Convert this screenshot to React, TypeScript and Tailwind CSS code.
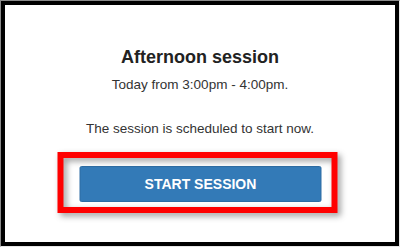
export default function App() {
  return (
    <div className="w-[400px] h-[247px] bg-white border border-t-[#8a8a8a] border-l-[#8a8a8a] border-r-[#e6e6e6] border-b-[#e6e6e6] box-border" style={{ fontFamily: '"Liberation Sans", Arial, sans-serif' }}>
      <div className="w-full h-full border-4 border-black bg-white flex flex-col items-center pt-[41px] box-border">
        <h1 className="text-[18px] leading-[22px] font-bold text-[#222]">Afternoon session</h1>
        <p className="mt-[9px] text-[13.5px] leading-[16px] text-[#333]">Today from 3:00pm - 4:00pm.</p>
        <p className="mt-[28px] text-[13.5px] leading-[16px] text-[#333]">The session is scheduled to start now.</p>
        <div className="relative mt-[29px] w-[242px] h-[36px] translate-x-[0.5px]">
          <button className="w-full h-full flex items-center justify-center bg-[#337ab7] border border-[#2e6da4] rounded-[2px] text-white font-bold text-[14px] leading-[20px]">
            START SESSION
          </button>
          <div className="absolute left-[-22px] top-[-14px] w-[280px] h-[61px] border-[6px] border-[#ff0000] pointer-events-none [filter:drop-shadow(3px_3px_3px_rgba(0,0,0,0.4))]" />
        </div>
      </div>
    </div>
  );
}
